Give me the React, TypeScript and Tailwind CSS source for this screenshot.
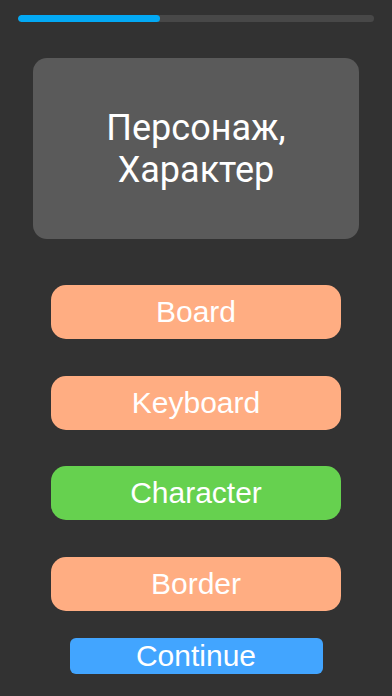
const options = [
  { label: 'Board', tone: 'bg-[#ffad82]' },
  { label: 'Keyboard', tone: 'bg-[#ffad82]' },
  { label: 'Character', tone: 'bg-[#66d14f]' },
  { label: 'Border', tone: 'bg-[#ffad82]' },
]

export default function App() {
  const progress = 40

  return (
    <div className="flex h-[696px] w-[392px] flex-col bg-[#323232]">
      <div className="mx-[18px] mt-[15px] h-[7px] overflow-hidden rounded-full bg-[#484848]">
        <div className="h-full rounded-full bg-[#03a9f4]" style={{ width: `${progress}%` }} />
      </div>

      <div className="mx-[33px] mt-[36px] flex h-[181px] items-center justify-center rounded-[14px] bg-[#5a5a5a]">
        <p className="text-center font-['Roboto',sans-serif] text-[36px] leading-[42px] text-white">
          Персонаж,
          <br />
          Характер
        </p>
      </div>

      <div className="mx-[51px] mt-[46px] flex flex-col gap-[36.5px]">
        {options.map((o) => (
          <button
            key={o.label}
            className={`h-[54px] rounded-[15px] ${o.tone} font-['Liberation_Sans',Arial,sans-serif] text-[30px] leading-none text-white`}
          >
            {o.label}
          </button>
        ))}
      </div>

      <button className="mx-auto mt-[27px] h-[36px] w-[253px] rounded-[6px] bg-[#42a5ff] font-['Liberation_Sans',Arial,sans-serif] text-[30px] leading-none text-white">
        Continue
      </button>
    </div>
  )
}
